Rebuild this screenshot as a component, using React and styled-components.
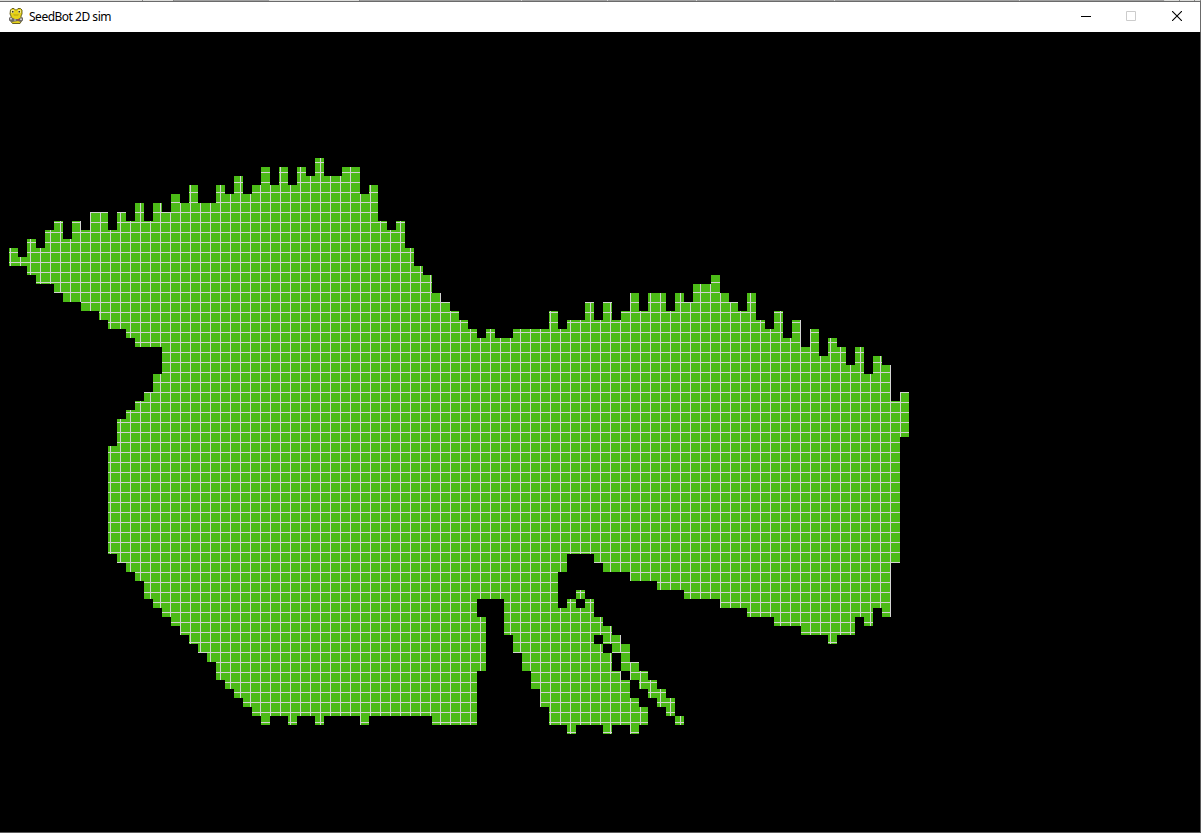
import React from 'react';
import styled, { createGlobalStyle } from 'styled-components';

const GlobalStyle = createGlobalStyle`
  html, body { margin: 0; padding: 0; background: #000; }
  body { overflow: hidden; }
`;

const Window = styled.div`
  box-sizing: border-box;
  width: 1201px;
  height: 833px;
  display: flex;
  flex-direction: column;
  background: #000;
  overflow: hidden;
`;

const BackdropStrip = styled.div`
  height: 1px;
  flex: none;
  display: flex;
  border-bottom: 1px solid #6b6b6b;
`;

const BackdropPiece = styled.span`
  box-sizing: border-box;
  width: ${(p) => p.$width}px;
  height: 1px;
  background: ${(p) => (p.$light ? '#dcdcda' : '#a0a0a0')};
  border-right: 1px solid ${(p) => (p.$light ? '#8a8a8a' : '#d4d4d4')};
`;

const TitleBar = styled.header`
  height: 30px;
  flex: none;
  display: flex;
  align-items: center;
  background: #fff;
  box-sizing: border-box;
  border-right: 1px solid #6b6b6b;
  padding: 0 0 2px 8px;
`;

const Title = styled.h1`
  flex: 1;
  margin: 2px 0 0 5px;
  font: 400 12px/16px "Noto Sans", "Open Sans", sans-serif;
  letter-spacing: -0.49px;
  color: #000;
`;

const Controls = styled.div`
  display: flex;
`;

const ControlButton = styled.button`
  width: ${(p) => p.$width || 46}px;
  height: 28px;
  padding: 0;
  border: 0;
  background: none;
  color: ${(p) => (p.$dim ? '#cccccc' : '#000')};
  display: flex;
  align-items: center;
  justify-content: center;
`;

const Field = styled.main`
  flex: 1;
  border-right: 1px solid #5a5a5a;
  border-bottom: 1px solid #5a5a5a;
  min-height: 0;
`;

const Canvas = styled.svg`
  display: block;
`;

const CELL = 9;
const LINE_STEP = 10;

// [top, bottom) runs measured in cells, one entry per column
const COLUMNS = [
  [[24, 26]], [[25, 26]], [[23, 27]], [[24, 28]], [[22, 28]], [[21, 29]], [[23, 30]], [[21, 30]], [[22, 31]], [[20, 31]],
  [[20, 32]], [[22, 33], [46, 58]], [[20, 33], [43, 59]], [[21, 34], [42, 60]], [[19, 35], [41, 61]],
  [[21, 35], [40, 63]], [[19, 35], [38, 64]], [[20, 65]], [[18, 66]], [[19, 67]],
  [[17, 68]], [[19, 69]], [[19, 70]], [[17, 72]], [[18, 73]], [[16, 74]], [[18, 75]], [[17, 76]], [[15, 77]], [[17, 76]],
  [[15, 76]], [[17, 77]], [[15, 76]], [[16, 76]], [[14, 77]], [[16, 76]], [[16, 76]], [[15, 76]], [[15, 76]], [[18, 77]],
  [[17, 76]], [[21, 76]], [[22, 76]], [[21, 76]], [[24, 76]], [[26, 76]], [[27, 76]], [[29, 77]], [[30, 77]], [[31, 77]],
  [[32, 77]], [[33, 77]], [[34, 63], [65, 71]], [[33, 63]], [[34, 63]], [[34, 67]], [[33, 69]], [[33, 71]], [[33, 73]], [[33, 75]],
  [[31, 77]], [[33, 60], [64, 77]], [[32, 58], [63, 78]], [[32, 58], [62, 63], [64, 77]], [[30, 58], [63, 77]],
  [[32, 59], [65, 67], [68, 77]], [[30, 60], [66, 68], [69, 78]], [[32, 60], [67, 69], [71, 77]],
  [[31, 60], [68, 71], [72, 77]], [[29, 61], [70, 72], [74, 78]],
  [[31, 61], [71, 73], [75, 77]], [[29, 61], [72, 74]], [[29, 62], [73, 75]], [[31, 62], [74, 76]], [[29, 62], [76, 77]],
  [[30, 63]], [[28, 63]], [[28, 63]], [[27, 63]], [[29, 64]],
  [[30, 64]], [[31, 64]], [[29, 65]], [[32, 65]], [[33, 65]], [[31, 66]], [[34, 66]], [[32, 66]], [[35, 67]], [[33, 67]],
  [[36, 67]], [[34, 68]], [[35, 67]], [[37, 67]], [[35, 65]], [[38, 66]], [[36, 64]], [[37, 65]], [[41, 59]], [[40, 45]],
];

const cellPath = COLUMNS.map((runs, i) =>
  runs.map(([a, b]) => `M${(i + 1) * CELL} ${a * CELL}h${CELL}v${(b - a) * CELL}h-${CELL}z`).join('')
).join('');

// Widths of the tabs that peek out above the window, left to right
const BACKDROP = [
  [143, true], [31, true], [96, false], [90, true], [162, false], [86, false], [89, false],
  [138, false], [185, false], [145, false], [15, true], [15, true], [6, true],
];

function SeedMap() {
  return (
    <Canvas width="1200" height="800" viewBox="0 0 1200 800" shapeRendering="crispEdges">
      <defs>
        <pattern id="lawn" width={LINE_STEP} height={LINE_STEP} patternUnits="userSpaceOnUse">
          <rect width="10" height="10" fill="#4cbb17" />
          <rect width="10" height="1" fill="#d3d3d3" />
          <rect width="1" height="10" fill="#d3d3d3" />
        </pattern>
      </defs>
      <path d={cellPath} fill="url(#lawn)" />
    </Canvas>
  );
}

function SnakeIcon() {
  return (
    <svg width="16" height="16" viewBox="0 0 16 16">
      <path d="M2.500 2 4 .5h2L7.500 2h1L10 .5h2.500L14 2v4l-1 2 .5 5-1.500 2.500H4.500L3 13.500V8L2 6z" fill="#e6d21a" stroke="#5c5416" strokeWidth=".9" />
      <path d="M3 2h3v3H3zM10 2h3v3h-3z" fill="#efe689" />
      <path d="M4 3h1.500v1.500H4zM10.500 3H12v1.500h-1.500z" fill="#3a3620" />
      <path d="M5 6.500h6l-1 1H6z" fill="#b39d12" />
      <path d="M1 9.500h3l3 1.500h3l2.500-1.500H15v3L12.500 14 10 13l-3 .5L4 14l-3-1.500z" fill="#6d6a68" />
      <path d="M2 10h2v1.500H2zM6 11.500h2v1H6zM12 10.500h2V12h-2z" fill="#c9c5c3" />
      <path d="M9.500 11h2v1.500h-2z" fill="#a04a3c" />
    </svg>
  );
}

export default function App() {
  return (
    <Window>
      <GlobalStyle />
      <BackdropStrip>
        {BACKDROP.map(([width, light], i) => (
          <BackdropPiece key={i} $width={width} $light={light} />
        ))}
      </BackdropStrip>
      <TitleBar>
        <SnakeIcon />
        <Title>SeedBot 2D sim</Title>
        <Controls>
          <ControlButton aria-label="Minimize" $width={44}>
            <svg width="10" height="10" shapeRendering="crispEdges"><path d="M0 5h10v1H0z" fill="currentColor" /></svg>
          </ControlButton>
          <ControlButton aria-label="Maximize" $dim>
            <svg width="10" height="10"><path d="M.5.5h9v9h-9z" fill="none" stroke="currentColor" /></svg>
          </ControlButton>
          <ControlButton aria-label="Close">
            <svg width="10" height="10"><path d="M0 0 10 10M10 0 0 10" stroke="currentColor" strokeWidth="1.100" /></svg>
          </ControlButton>
        </Controls>
      </TitleBar>
      <Field>
        <SeedMap />
      </Field>
    </Window>
  );
}
